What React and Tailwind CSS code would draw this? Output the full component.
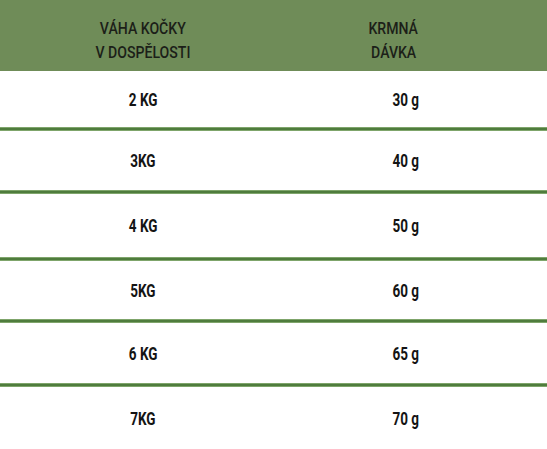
import React from 'react';

const rows = [
    { kg: '2 KG', g: '30 g', h: 'h-[56px]' },
    { kg: '3KG', g: '40 g', h: 'h-[59px]' },
    { kg: '4 KG', g: '50 g', h: 'h-[63px]' },
    { kg: '5KG', g: '60 g', h: 'h-[58px]' },
    { kg: '6 KG', g: '65 g', h: 'h-[60px]' },
    { kg: '7KG', g: '70 g', h: 'h-[62px]' },
];

const App = () => {
    return (
        <div
            className="w-[547px] h-[449px] bg-white overflow-hidden"
            style={{ fontFamily: 'Roboto, "Liberation Sans", sans-serif' }}
        >
            {/* header */}
            <div className="grid grid-cols-[286px_1fr] h-[71px] bg-[#6f8c58] text-[#1c1f18] text-[16px] leading-[24px] font-medium">
                <div className="flex flex-col items-center justify-center pt-[10px]">
                    <span className="inline-block scale-x-[0.88]">VÁHA KOČKY</span>
                    <span className="inline-block scale-x-[0.88]">V DOSPĚLOSTI</span>
                </div>
                <div className="flex flex-col items-center justify-center pr-[46px] pt-[10px]">
                    <span className="inline-block scale-x-[0.88]">KRMNÁ</span>
                    <span className="inline-block scale-x-[0.88]">DÁVKA</span>
                </div>
            </div>

            {/* rows */}
            {rows.map((row, i) => (
                <div key={row.kg}>
                    {i > 0 && <div className="h-[4px] bg-[#4f7c3d] border-y border-[#7fa56b]"></div>}
                    <div className={`grid grid-cols-[286px_1fr] items-center font-bold text-[18px] text-[#141414] ${row.h}`}>
                        <div className="text-center">
                            <span className="inline-block scale-x-[0.75]">{row.kg}</span>
                        </div>
                        <div className="text-center pr-[22px]">
                            <span className="inline-block scale-x-[0.75]">{row.g}</span>
                        </div>
                    </div>
                </div>
            ))}
        </div>
    );
};

export default App;
